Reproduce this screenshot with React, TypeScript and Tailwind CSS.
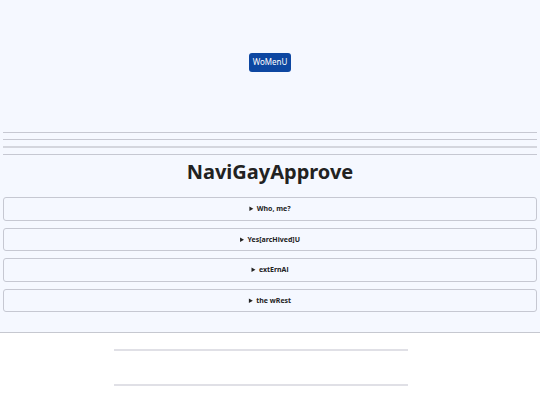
import React from 'react';

const items = ['Who, me?', 'Yes[arcHived]U', 'extErnAl', 'the wRest'];

function Rule({ className = '' }: { className?: string }) {
  return <hr className={`mx-[3px] border-t border-[#c6c8d2] ${className}`} />;
}

export default function App() {
  return (
    <div className="min-h-screen bg-white font-['Noto_Sans',sans-serif] text-[#222]">
      <section className="bg-[#f5f8ff] border-b border-[#c6c8d0] pb-[20px]">
        <header className="h-[128px] flex items-center justify-center pb-[4px]">
          <button className="h-[19px] px-[4px] rounded-[3px] bg-[#0d47a1] text-white text-[8px] leading-none">
            WoMenU
          </button>
        </header>
        <div className="flex flex-col gap-[6px] pt-[4px]">
          <Rule />
          <Rule />
          <Rule className="border-t-2 border-[#d4d6de]" />
          <Rule />
        </div>
        <h1 className="text-center text-[20px] font-bold leading-[30px] mt-[2px] mb-[10px]">NaviGayApprove</h1>
        <div className="flex flex-col gap-[7px] px-[3px]">
          {items.map((item) => (
            <details key={item} className="border border-[#c6c8d2] rounded-[3px] bg-[#f5f8ff]">
              <summary className="text-center text-[7px] font-bold leading-[21.5px] cursor-pointer">{item}</summary>
            </details>
          ))}
        </div>
      </section>
      <div className="w-[294px] ml-[114px] pt-[16px] flex flex-col gap-[33px]">
        <hr className="border-t-2 border-[#e0e0e6]" />
        <hr className="border-t-2 border-[#e0e0e6]" />
      </div>
    </div>
  );
}
